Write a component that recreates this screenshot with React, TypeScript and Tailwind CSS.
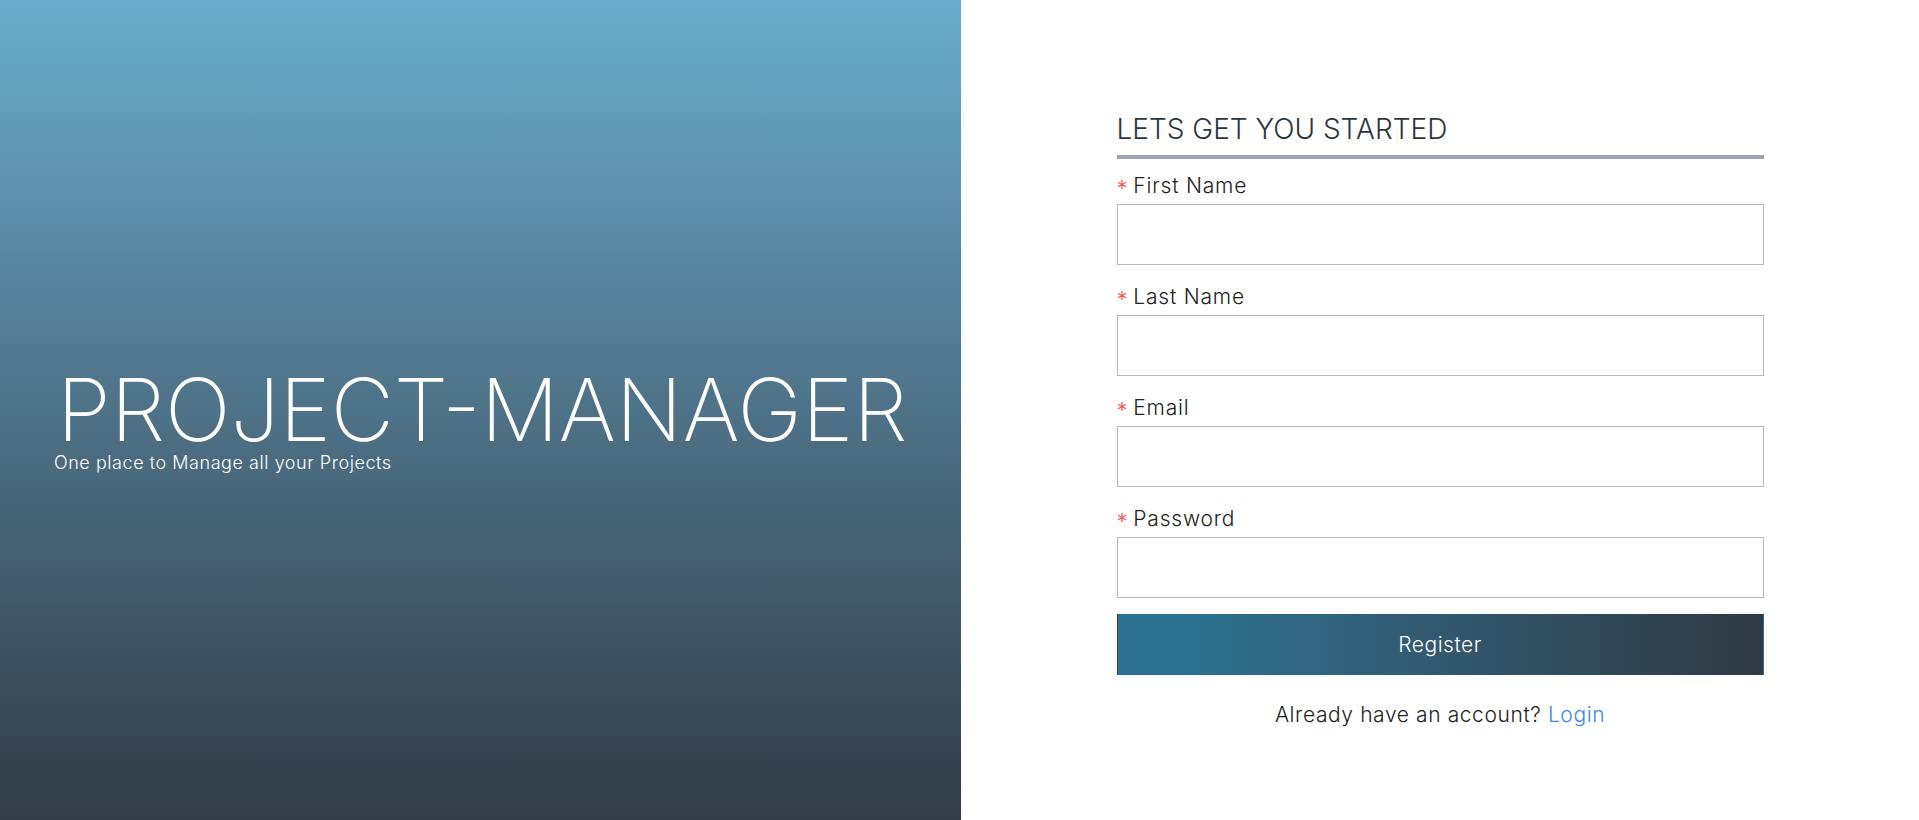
import React from 'react'

const fields = ['First Name', 'Last Name', 'Email', 'Password']

const Field = ({ label }: { label: string }) => (
  <div className="mb-5 flex flex-col">
    <label className="flex h-6 items-center text-[21px] font-light tracking-[0.8px] text-[#222]">
      <span className="mr-[5px] pt-1 text-[22px] leading-none text-[#ff4d4f]">*</span>
      {label}
    </label>
    <input
      type={label === 'Password' ? 'password' : 'text'}
      className="mt-[6px] h-[61px] w-full border border-[#b8b8b8] bg-white px-3 outline-none"
    />
  </div>
)

const App = () => {
  return (
    <main className="flex h-[820px] w-full font-['Inter',sans-serif]">
      <section className="flex h-full w-[961px] shrink-0 flex-col justify-center bg-gradient-to-b from-[#69adce] to-[#323c47] pt-[24px] pl-[54px] text-white">
        <h1 className="pl-[3px] text-[87px] leading-[0.95] font-extralight whitespace-nowrap">
          PROJECT-MANAGER
        </h1>
        <p className="text-[18px] leading-6 font-light tracking-[0.55px]">
          One place to Manage all your Projects
        </p>
      </section>

      <section className="flex flex-1 justify-center bg-white pt-[113px]">
        <div className="w-[647px]">
          <h2 className="border-b-[4px] border-[#9ca3af] pb-[10px] text-[28px] leading-8 font-light tracking-[0px] text-[#2c3440]">
            LETS GET YOU STARTED
          </h2>
          <form className="mt-[15px]">
            {fields.map((f) => (
              <Field key={f} label={f} />
            ))}
            <button
              type="button"
              className="-mt-1 h-[61px] w-full border-r border-l border-r-[#2e7191] border-l-[#2f3942] bg-gradient-to-r from-[#2d7293] from-10% to-[#2f3942] text-[21px] font-light tracking-[0.5px] text-white"
            >
              Register
            </button>
          </form>
          <p className="mt-[24px] text-center text-[21px] font-light tracking-[0.6px] text-[#222]">
            Already have an account? <a className="text-[#3d86f5]">Login</a>
          </p>
        </div>
      </section>
    </main>
  )
}

export default App
